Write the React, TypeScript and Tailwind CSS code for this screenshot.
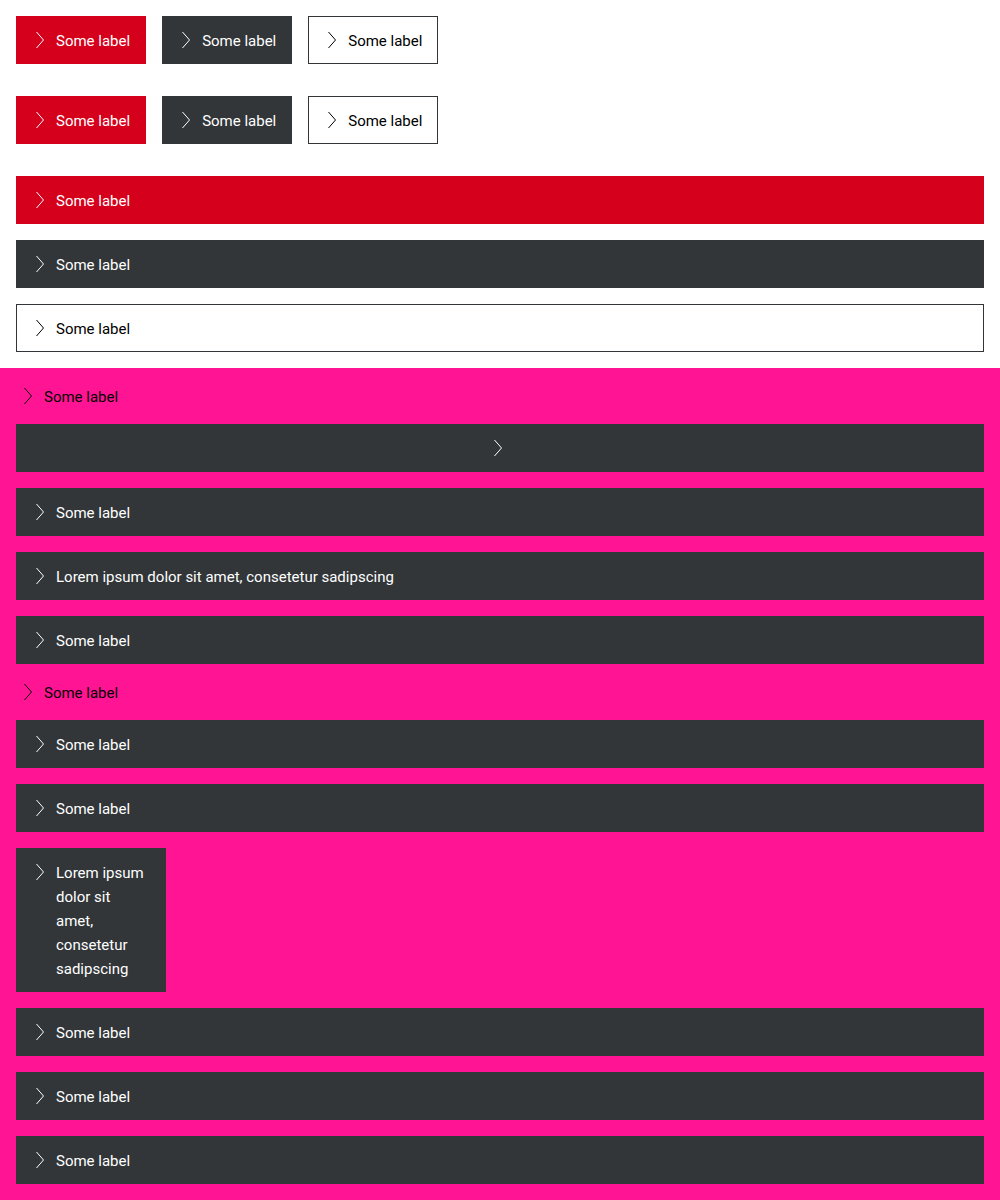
import type { ReactNode } from 'react';

type Variant = 'primary' | 'secondary' | 'tertiary';

const variantClass: Record<Variant, string> = {
  primary: 'bg-[#d5001c] text-white py-3 pl-3 pr-4',
  secondary: 'bg-[#323639] text-white py-3 pl-3 pr-4',
  tertiary: 'bg-white text-black border border-[#323639] py-[11px] pl-[11px] pr-[15px]',
};

function Chevron() {
  return (
    <svg viewBox="0 0 24 24" className="w-6 h-6 shrink-0" fill="none">
      <path d="M8.5 4l7 8-7 8" stroke="currentColor" strokeWidth="1" />
    </svg>
  );
}

function LinkButton({
  variant = 'secondary',
  full = false,
  children,
  className = '',
}: {
  variant?: Variant;
  full?: boolean;
  children?: ReactNode;
  className?: string;
}) {
  const iconOnly = !children;
  return (
    <a
      href="#"
      className={`${full ? 'flex self-stretch' : 'inline-flex self-start'} ${variantClass[variant]} ${
        iconOnly ? 'justify-center' : ''
      } gap-1 items-start ${className}`}
    >
      <Chevron />
      {children && <span className="leading-6 translate-y-px">{children}</span>}
    </a>
  );
}

function PlainLink({ children }: { children: ReactNode }) {
  return (
    <a href="#" className="flex items-start gap-1 text-black h-6">
      <Chevron />
      <span className="leading-6 translate-y-px">{children}</span>
    </a>
  );
}

export default function App() {
  return (
    <div
      className="text-[15px] leading-6"
      style={{ fontFamily: 'Roboto, "Liberation Sans", sans-serif' }}
    >
      <div className="p-4 flex flex-col gap-4 bg-white">
        <div className="flex gap-4 items-start">
          <LinkButton variant="primary">Some label</LinkButton>
          <LinkButton variant="secondary">Some label</LinkButton>
          <LinkButton variant="tertiary">Some label</LinkButton>
        </div>
        <div className="flex gap-4 mt-4 items-start">
          <LinkButton variant="primary">Some label</LinkButton>
          <LinkButton variant="secondary">Some label</LinkButton>
          <LinkButton variant="tertiary">Some label</LinkButton>
        </div>
        <div className="flex flex-col gap-4 mt-4">
          <LinkButton variant="primary" full>Some label</LinkButton>
          <LinkButton variant="secondary" full>Some label</LinkButton>
          <LinkButton variant="tertiary" full>Some label</LinkButton>
        </div>
      </div>
      <div className="bg-[#ff1493] p-4 flex flex-col gap-4">
        <PlainLink>Some label</PlainLink>
        <LinkButton full />
        <LinkButton full>Some label</LinkButton>
        <LinkButton full>Lorem ipsum dolor sit amet, consetetur sadipscing</LinkButton>
        <LinkButton full>Some label</LinkButton>
        <PlainLink>Some label</PlainLink>
        <LinkButton full>Some label</LinkButton>
        <LinkButton full>Some label</LinkButton>
        <LinkButton className="w-[150px]">Lorem ipsum dolor sit amet, consetetur sadipscing</LinkButton>
        <LinkButton full>Some label</LinkButton>
        <LinkButton full>Some label</LinkButton>
        <LinkButton full>Some label</LinkButton>
      </div>
    </div>
  );
}
